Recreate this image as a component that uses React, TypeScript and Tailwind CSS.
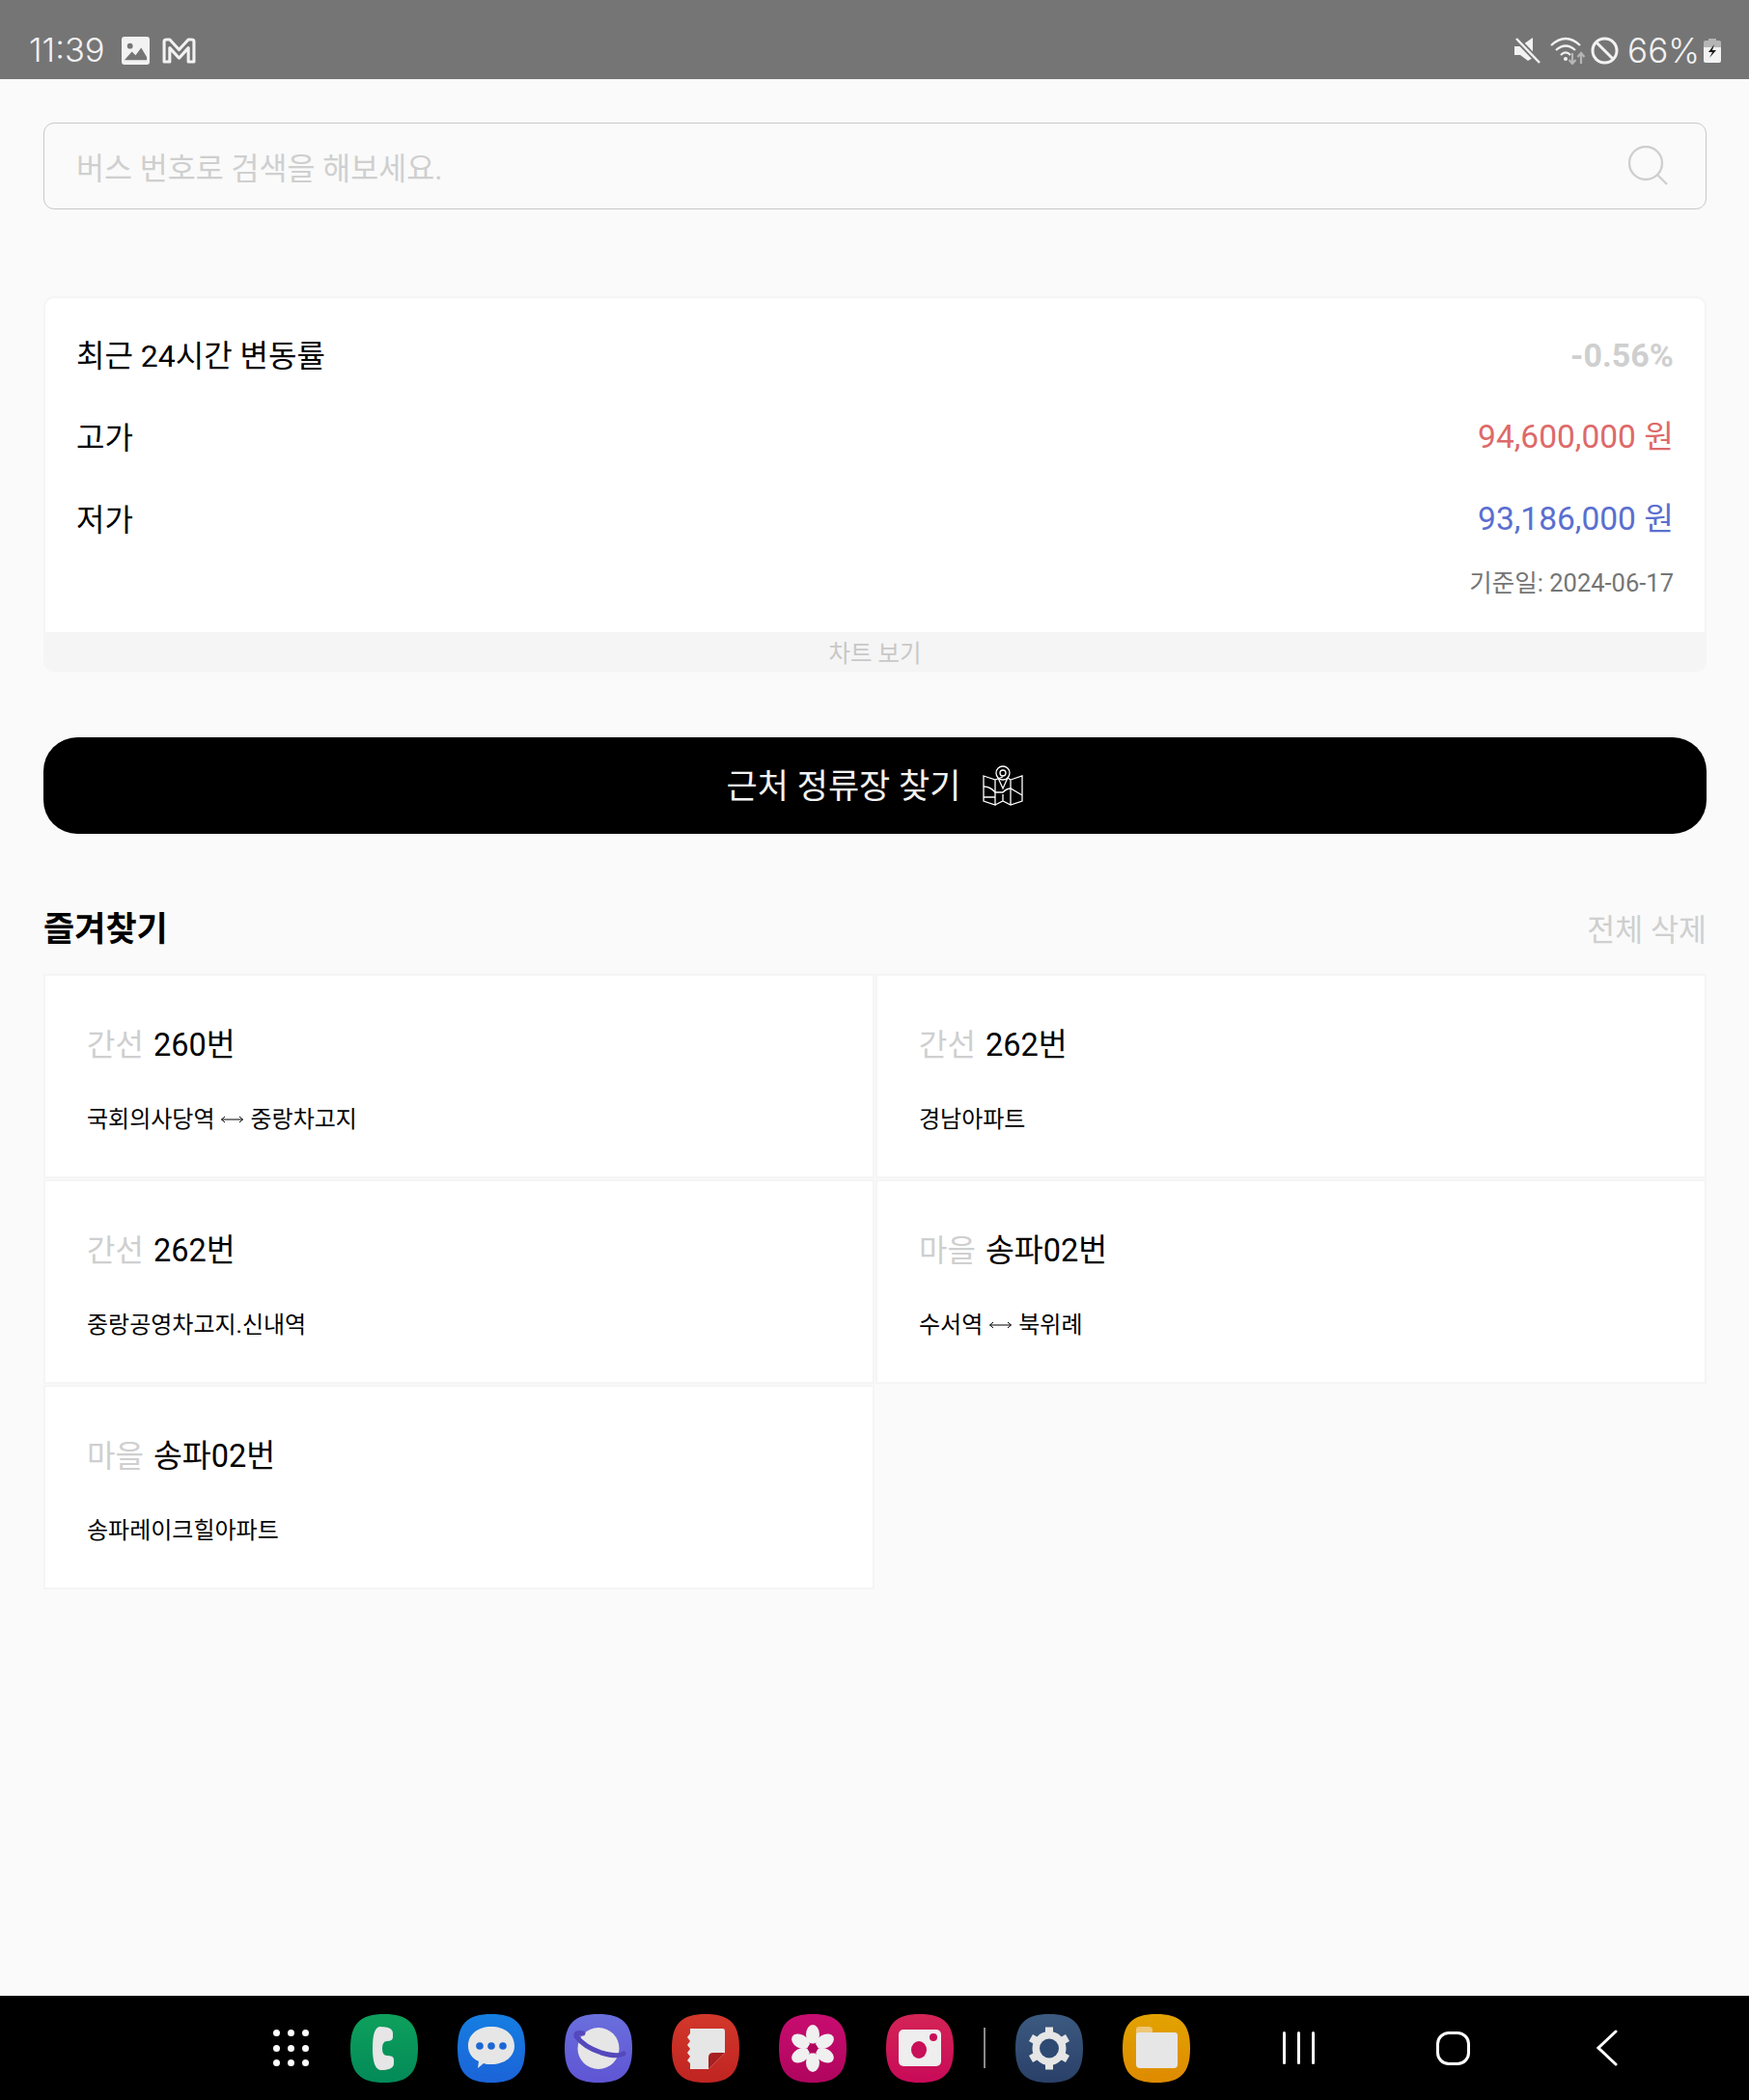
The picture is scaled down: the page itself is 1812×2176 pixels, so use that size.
const FONT = "font-['Roboto','Noto_Sans_CJK_KR',sans-serif]";

const FAVORITES = [
  { type: "간선", name: "260번", from: "국회의사당역", to: "중랑차고지" },
  { type: "간선", name: "262번", from: "경남아파트" },
  { type: "간선", name: "262번", from: "중랑공영차고지.신내역" },
  { type: "마을", name: "송파02번", from: "수서역", to: "북위례" },
  { type: "마을", name: "송파02번", from: "송파레이크힐아파트" },
];

const SQUIRCLE = "M35 0C60 0 70 10 70 35.5C70 61 60 71 35 71C10 71 0 61 0 35.5C0 10 10 0 35 0Z";

function AppIcon({ id, from, to, children }: { id: string; from: string; to: string; children: React.ReactNode }) {
  return (
    <svg width="70" height="71" viewBox="0 0 70 71" className="shrink-0">
      <defs>
        <linearGradient id={id} x1="0" y1="0" x2="0" y2="1">
          <stop offset="0" stopColor={from} />
          <stop offset="1" stopColor={to} />
        </linearGradient>
      </defs>
      <path d={SQUIRCLE} fill={`url(#${id})`} />
      {children}
    </svg>
  );
}

function Row({ label, value, valueClass }: { label: string; value: string; valueClass: string }) {
  return (
    <div className="flex h-[85px] items-center justify-between">
      <span className="text-[32px] text-black">{label}</span>
      <span className={valueClass}>{value}</span>
    </div>
  );
}

function StatusBar() {
  return (
    <div className="flex h-[82px] items-end justify-between bg-[#757575] pb-[10px] pl-[30px] pr-[29px] text-[#f2f2f2]">
      <div className="flex items-center">
        <span className="font-['Inter'] text-[34.5px] leading-[40px] font-light">11:39</span>
        <svg width="29" height="29" viewBox="0 0 30 30" className="ml-[17px]">
          <rect width="30" height="30" rx="3" fill="#f2f2f2" />
          <circle cx="9" cy="10" r="3" fill="#757575" />
          <path d="M3 25L11 16L15 20L21 12L27 22V25Z" fill="#757575" />
        </svg>
        <svg width="35" height="27" viewBox="0 0 36 28" className="ml-[13px]" fill="none" stroke="#f2f2f2" strokeWidth="3.2" strokeLinejoin="round">
          <path d="M2 26V4Q2 2 5 2H8L18 13L28 2H31Q34 2 34 4V26H28V11L18 22L8 11V26Z" />
        </svg>
      </div>
      <div className="flex items-center">
        <svg width="27" height="27" viewBox="0 0 27 27">
          <path d="M0 9H6L19 0V21L14 24L6 18H0Z" fill="#f2f2f2" />
          <path d="M2 1L26 26" stroke="#757575" strokeWidth="6" />
          <path d="M2 1L26 26" stroke="#f2f2f2" strokeWidth="2.5" />
        </svg>
        <svg width="38" height="30" viewBox="0 0 38 30" className="ml-[10px]" fill="none">
          <path d="M1 10Q16 -4 31 10M6 15Q16 6 26 15M11 20Q16 15 21 20" stroke="#f2f2f2" strokeWidth="2.2" />
          <circle cx="16" cy="24" r="2" fill="#f2f2f2" />
          <path d="M23 18V28M19.5 25L23 29L26.5 25M32 29V19M28.5 22L32 18L35.5 22" stroke="#b5b5b5" strokeWidth="2.2" />
        </svg>
        <svg width="29" height="29" viewBox="0 0 29 29" className="ml-[4px]" fill="none" stroke="#f2f2f2" strokeWidth="3">
          <circle cx="14.5" cy="14.5" r="12.5" />
          <path d="M6 6L23 23" />
        </svg>
        <span className="ml-[9px] font-['Inter'] text-[35px] leading-[40px] font-light">66%</span>
        <svg width="18" height="25" viewBox="0 0 18 25" className="ml-[4px]">
          <path d="M5 0H13V2H16Q18 2 18 4V9H0V4Q0 2 2 2H5Z" fill="#b5b5b5" />
          <path d="M0 9H18V23Q18 25 16 25H2Q0 25 0 23Z" fill="#f2f2f2" />
          <path d="M11 6L5 14H9L6 20L13 12H9Z" fill="#1a1a1a" />
        </svg>
      </div>
    </div>
  );
}

function NavBar() {
  return (
    <div className="flex h-[108px] items-center bg-black pl-[283px]">
      <div className="grid w-[37px] grid-cols-3 gap-y-[8.5px] gap-x-[8px]">
        {Array.from({ length: 9 }).map((_, i) => (
          <span key={i} className="size-[7px] rounded-full bg-white" />
        ))}
      </div>
      <div className="ml-[43px] flex items-center gap-[41px]">
        <AppIcon id="phone" from="#0ea05c" to="#038a58">
          <path d="M31 13Q44 13 44 20V24Q44 28 38 28Q33 28 33 35.5Q33 43 38 43Q45 43 45 47V51Q45 58 32 58Q23 58 23 35.5Q23 13 31 13Z" fill="#e6e6e6" />
        </AppIcon>
        <AppIcon id="msg" from="#157ee2" to="#1b63d8">
          <path d="M35 13C49 13 59 21 59 33C59 44 49 52 35 52C32 52 29 52 27 51L21 56L22 49C15 46 11 40 11 33C11 21 21 13 35 13Z" fill="#e6e6e6" />
          <circle cx="23" cy="33" r="3.8" fill="#1c66d6" />
          <circle cx="35" cy="33" r="3.8" fill="#1c66d6" />
          <circle cx="47" cy="33" r="3.8" fill="#1c66d6" />
        </AppIcon>
        <AppIcon id="net" from="#6a6fdc" to="#5f55d4">
          <circle cx="35" cy="35.5" r="21.5" fill="#e6e6e6" />
          <path d="M19 20Q11 18 12 23Q20 34 38 40Q55 45 61 41" fill="none" stroke="#5448bd" strokeWidth="5" strokeLinecap="round" />
        </AppIcon>
        <AppIcon id="notes" from="#d2382a" to="#c02422">
          <path d="M19 15H53Q55 15 55 18V40L38 57H19V51L16 48L19 44L16 40L19 36L16 32L19 28L16 24L19 20Z" fill="#e6e6e6" />
          <path d="M55 40L41 54L38 57V45Q38 40 43 40Z" fill="#a81f20" />
        </AppIcon>
        <AppIcon id="gallery" from="#c80d70" to="#b0055e">
          <g fill="#f0f0f0">
            <ellipse cx="35" cy="21" rx="7" ry="10" />
            <ellipse cx="35" cy="50" rx="7" ry="10" />
            <ellipse cx="35" cy="21" rx="7" ry="10" transform="rotate(60 35 35.5)" />
            <ellipse cx="35" cy="21" rx="7" ry="10" transform="rotate(120 35 35.5)" />
            <ellipse cx="35" cy="21" rx="7" ry="10" transform="rotate(240 35 35.5)" />
            <ellipse cx="35" cy="21" rx="7" ry="10" transform="rotate(300 35 35.5)" />
          </g>
          <circle cx="35" cy="35.5" r="5" fill="#b0055e" />
        </AppIcon>
        <AppIcon id="camera" from="#d42456" to="#c80a58">
          <rect x="13" y="16" width="44" height="38" rx="5" fill="#eeeeee" />
          <ellipse cx="34" cy="37" rx="8" ry="9" fill="#c80f58" />
          <circle cx="49" cy="24" r="4" fill="#c80f58" />
        </AppIcon>
        <span className="-mx-[10px] h-[42px] w-[2px] bg-[#8a8a8a]" />
        <AppIcon id="settings" from="#3c5a80" to="#2a4068">
          <circle cx="35" cy="35.5" r="17.5" fill="#e6e6e6" />
          <g stroke="#e6e6e6" strokeWidth="8">
            <path d="M35 13.5V57.5" />
            <path d="M16 24.5L54 46.5" />
            <path d="M16 46.5L54 24.5" />
          </g>
          <circle cx="35" cy="35.5" r="10" fill="#2f4a72" />
        </AppIcon>
        <AppIcon id="files" from="#e2a300" to="#de8a00">
          <path d="M14 16Q14 13 17 13H27Q31 13 31 16V22H14Z" fill="#eec677" />
          <path d="M14 22Q14 19 17 19H54Q57 19 57 22V52Q57 56 53 56H18Q14 56 14 52Z" fill="#e6e6e6" />
        </AppIcon>
      </div>
      <div className="ml-[96px] flex h-[34px] w-[33px] justify-between">
        <span className="w-[3px] rounded-full bg-white" />
        <span className="w-[3px] rounded-full bg-white" />
        <span className="w-[3px] rounded-full bg-white" />
      </div>
      <span className="ml-[126px] h-[35px] w-[35px] rounded-[13px] border-[3px] border-white" />
      <svg width="22" height="38" viewBox="0 0 22 38" className="ml-[131px]" fill="none" stroke="#fff" strokeWidth="3" strokeLinecap="round">
        <path d="M20 2L2 19L20 36" />
      </svg>
    </div>
  );
}

export default function App() {
  return (
    <div className={`flex h-[2176px] w-[1812px] flex-col bg-[#fafafa] ${FONT}`}>
      <StatusBar />
      <main className="flex-1 pl-[45px] pr-[44px]">
        <div className="mt-[45px] flex h-[90px] items-center justify-between rounded-[11px] border border-[#c8c8c8] pl-[33px] pr-[38px]">
          <span className="pt-[7px] text-[31.5px] text-[#cfcfcf]">버스 번호로 검색을 해보세요.</span>
          <svg width="42" height="42" viewBox="0 0 42 42" fill="none" stroke="#cfcfcf" strokeWidth="2.4">
            <circle cx="18" cy="18" r="17" />
            <path d="M30 30L40 40" />
          </svg>
        </div>

        <section className="mt-[90px] overflow-hidden rounded-[11px] border-2 border-[#f5f5f5] bg-white">
          <div className="px-[32px] pt-[17px]">
            <Row label="최근 24시간 변동률" value="-0.56%" valueClass="text-[34px] font-bold text-[#cfcfcf]" />
            <Row label="고가" value="94,600,000 원" valueClass="text-[33.5px] text-[#dd6a6a]" />
            <Row label="저가" value="93,186,000 원" valueClass="text-[33.5px] text-[#5a6fcf]" />
            <p className="mt-[3px] text-right text-[25.5px] leading-[40px] text-[#757575]">기준일: 2024-06-17</p>
          </div>
          <div className="mt-[31px] flex h-[39px] items-center justify-center bg-[#f5f5f5] pt-[7px] text-[24.5px] text-[#c8c8c8]">차트 보기</div>
        </section>

        <button type="button" className="mt-[68px] flex h-[100px] w-full items-center justify-center rounded-[35px] bg-black text-[35px] text-[#f2f2f2]">
          <span className="pt-[4px]">근처 정류장 찾기</span>
          <svg width="42" height="42" viewBox="0 0 42 42" className="ml-[23px]" fill="none" stroke="#fff" strokeWidth="1.3">
            <path d="M1 11L13 15V41L1 37ZM13 15L21 12M29 15L41 11V37L29 41L21 37L13 41M29 15V41M21 30V37M29 15L26 13" />
            <circle cx="21" cy="8" r="7" />
            <circle cx="21" cy="8" r="3" />
            <path d="M16 13L21 24L26 13M1 22Q8 22 13 28H21Q25 24 29 24L41 31M1 33H5Q8 33 13 33" />
          </svg>
        </button>

        <div className="mt-[68px] flex h-[65px] items-center justify-between">
          <h2 className="text-[35px] font-bold text-black">즐겨찾기</h2>
          <span className="text-[31.5px] text-[#cfcfcf]">전체 삭제</span>
        </div>

        <div className="mt-[12px] grid grid-cols-2 gap-[1px]">
          {FAVORITES.map((f, i) => (
            <div key={i} className="h-[212px] border-2 border-[#f5f5f5] bg-white px-[43px] pt-[50px]">
              <div className="flex items-baseline leading-[44px]">
                <span className="text-[32px] text-[#cfcfcf]">{f.type}</span>
                <span className="ml-[10px] text-[32.5px] text-black">{f.name}</span>
              </div>
              <p className="mt-[38px] flex items-center text-[24px] leading-[34px] text-black">
                <span>{f.from}</span>
                {f.to && (
                  <>
                    <svg width="23" height="10" viewBox="0 0 23 10" className="mx-[7px]" fill="none" stroke="#000" strokeWidth="1">
                      <path d="M0.5 5H22.5M4 2L0.5 5L4 8M19 2L22.5 5L19 8" />
                    </svg>
                    <span>{f.to}</span>
                  </>
                )}
              </p>
            </div>
          ))}
        </div>
      </main>
      <NavBar />
    </div>
  );
}
